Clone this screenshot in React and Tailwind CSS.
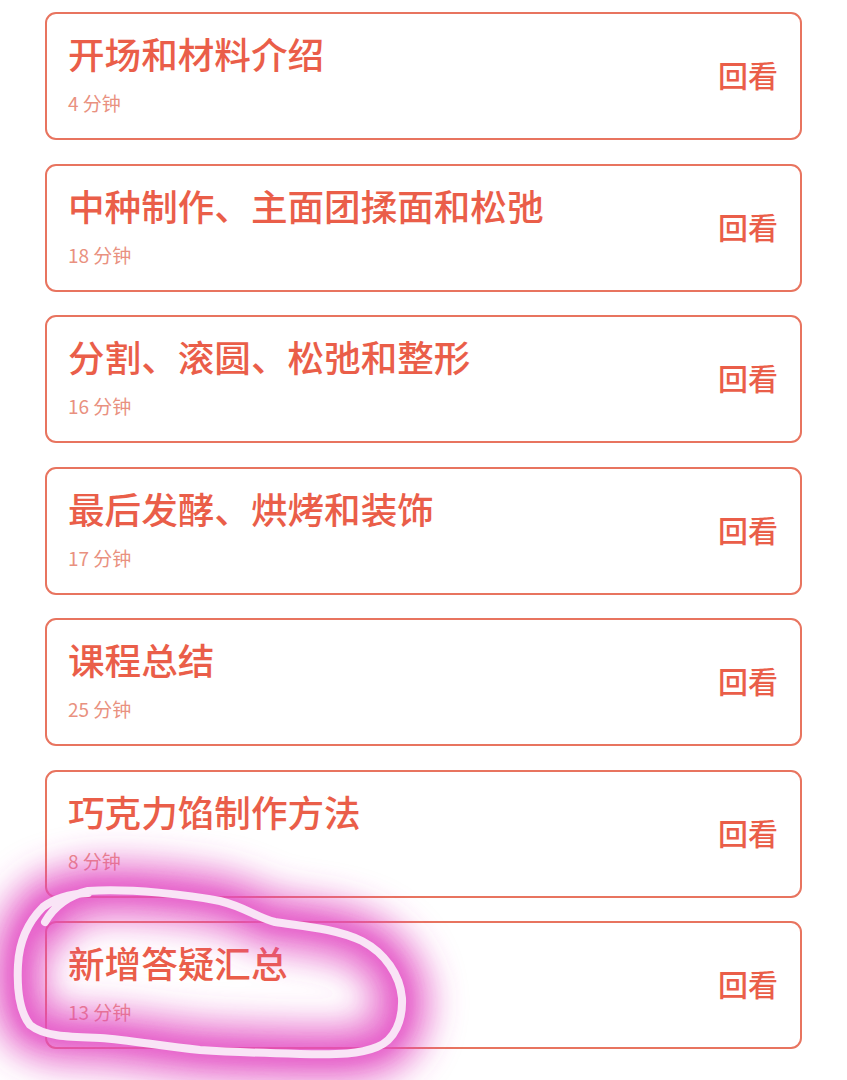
import React from "react";

const lessons = [
  { title: "开场和材料介绍", minutes: "4 分钟" },
  { title: "中种制作、主面团揉面和松弛", minutes: "18 分钟" },
  { title: "分割、滚圆、松弛和整形", minutes: "16 分钟" },
  { title: "最后发酵、烘烤和装饰", minutes: "17 分钟" },
  { title: "课程总结", minutes: "25 分钟" },
  { title: "巧克力馅制作方法", minutes: "8 分钟" },
  { title: "新增答疑汇总", minutes: "13 分钟" },
];

const LessonCard = ({ title, minutes }) => (
  <div className="h-[128px] rounded-[11px] border-2 border-[#e8745f] bg-white flex items-center justify-between pl-[21px] pr-[22px]">
    <div className="flex flex-col">
      <div className="text-[36.6px] leading-[42px] font-medium text-[#ea5e49] -mt-[4px]">{title}</div>
      <div className="text-[19px] leading-[24px] text-[#e9917f] mt-[16px]">{minutes}</div>
    </div>
    <div className="text-[30px] leading-[34px] font-medium text-[#ea5e49] -mt-[4px]">回看</div>
  </div>
);

const loopPath =
  "M45 922 C55 905 70 895 88 891 C130 888 190 895 220 901 C245 907 258 918 275 922 C300 926 335 928 362 941 C385 953 400 975 402 998 C403 1020 395 1040 377 1047 C360 1054 340 1055 300 1054 C260 1053 230 1052 200 1050 C160 1046 130 1040 100 1038 C70 1037 45 1037 30 1025 C18 1010 17 985 18 965 C19 945 25 925 43 907 C55 898 70 894 88 893";

const Highlight = () => (
  <svg className="absolute left-0 top-0 pointer-events-none" width="847" height="1080" viewBox="0 0 847 1080">
    <defs>
      <filter id="glow" x="-40%" y="-60%" width="180%" height="220%">
        <feGaussianBlur stdDeviation="17" />
      </filter>
      <filter id="glow2" x="-30%" y="-50%" width="160%" height="200%">
        <feGaussianBlur stdDeviation="7" />
      </filter>
    </defs>
    <path d={loopPath} fill="none" stroke="#e040bd" strokeWidth="56" strokeOpacity="0.75" strokeLinecap="round" filter="url(#glow)" />
    <path d={loopPath} fill="none" stroke="#e452c6" strokeWidth="18" strokeOpacity="0.6" strokeLinecap="round" filter="url(#glow2)" />
    <path d={loopPath} fill="none" stroke="#f9e4f6" strokeWidth="8" strokeLinecap="round" strokeLinejoin="round" />
  </svg>
);

export default function App() {
  return (
    <div
      className="relative w-[847px] h-[1080px] bg-white overflow-hidden"
      style={{ fontFamily: '"Noto Sans CJK SC", "Noto Sans", sans-serif' }}
    >
      <div className="flex flex-col gap-[23.5px] pt-[12px] px-[45px]">
        {lessons.map((l) => (
          <LessonCard key={l.title} title={l.title} minutes={l.minutes} />
        ))}
      </div>
      <Highlight />
    </div>
  );
}
